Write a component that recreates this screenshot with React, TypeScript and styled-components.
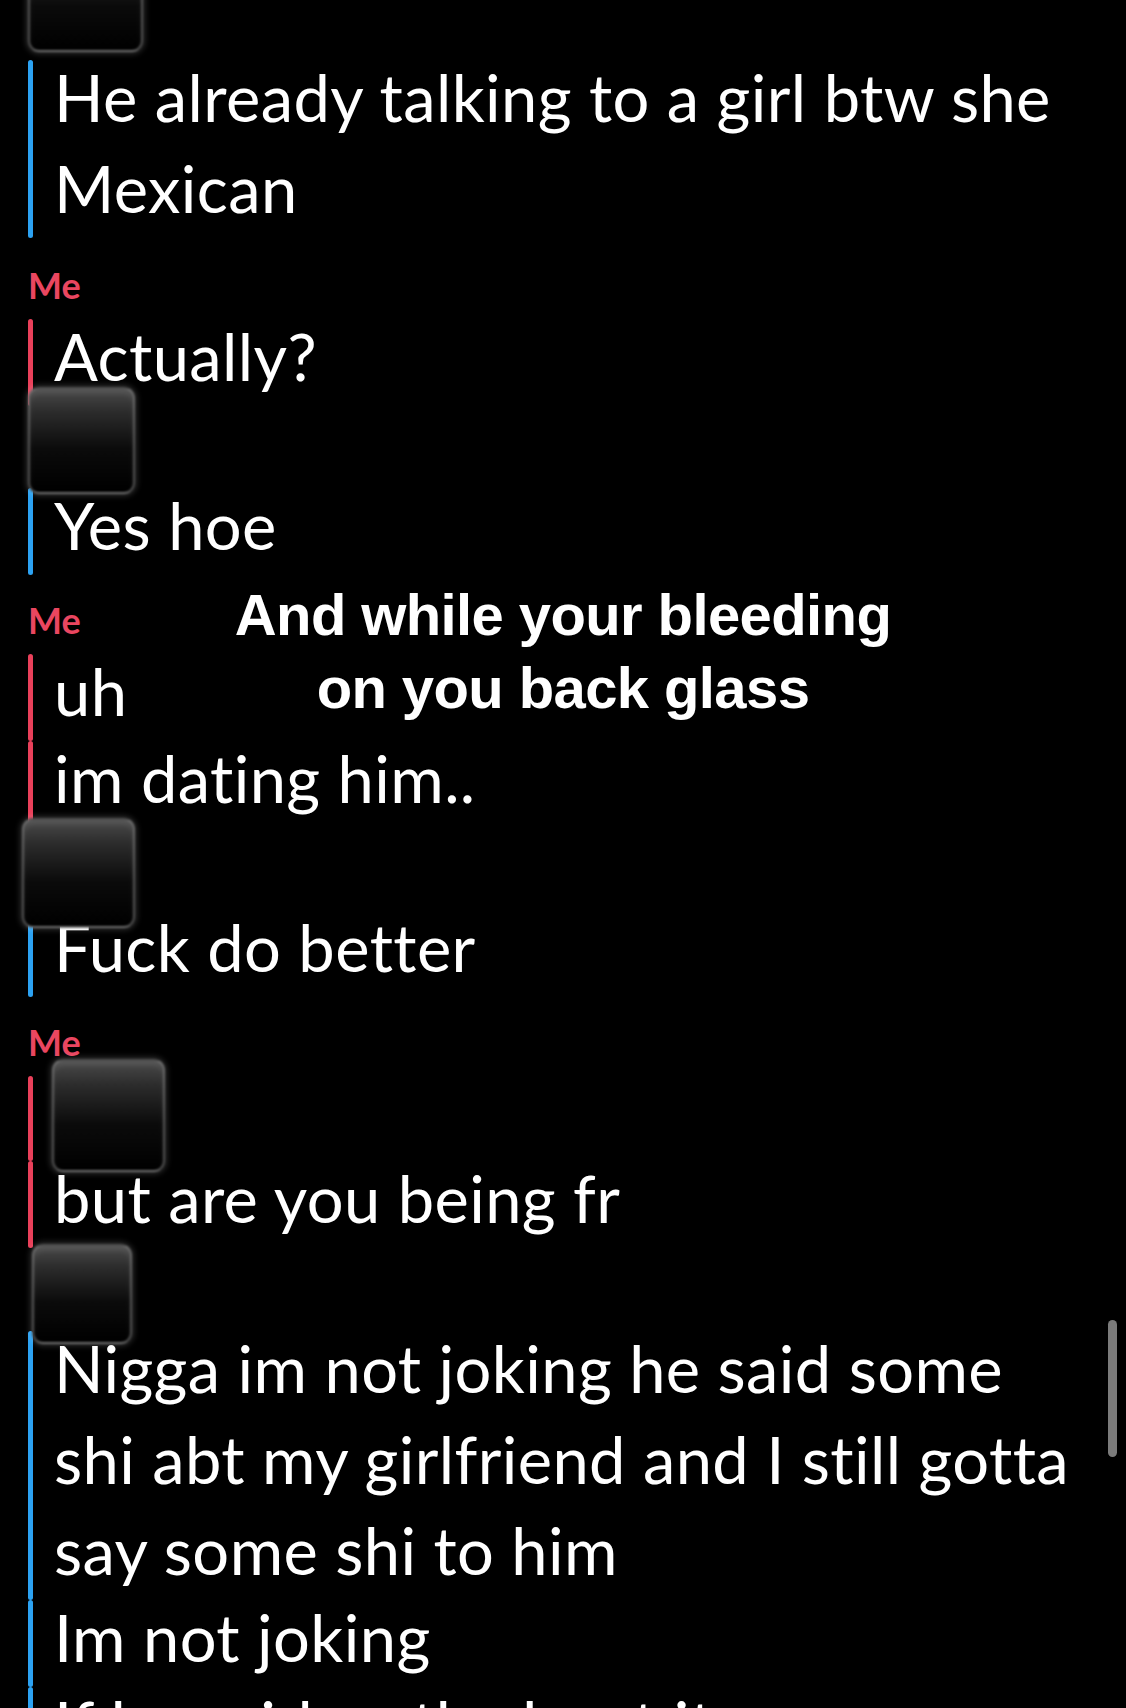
import React from "react";
import styled, { createGlobalStyle } from "styled-components";

const Global = createGlobalStyle`
  html, body {
    margin: 0;
    padding: 0;
    background: #000;
  }
  body {
    font-family: Lato, "Noto Sans", sans-serif;
  }
`;

const Screen = styled.div`
  position: relative;
  width: 1126px;
  height: 1708px;
  overflow: hidden;
  background: #000;
`;

const Chat = styled.div`
  display: flex;
  flex-direction: column;
  align-items: flex-start;
  padding-left: 28px;
  margin-top: -58px;
`;

const Thumb = styled.div<{ $w: number; $h: number; $mt: number; $mb: number; $ml?: number }>`
  position: relative;
  z-index: 1;
  width: ${(p) => p.$w}px;
  height: ${(p) => p.$h}px;
  margin-top: ${(p) => p.$mt}px;
  margin-bottom: ${(p) => p.$mb}px;
  margin-left: ${(p) => p.$ml ?? 0}px;
  box-sizing: border-box;
  border-radius: 11px;
  border: 2px solid rgba(140, 140, 140, 0.55);
  background: linear-gradient(180deg, #4a4a4a 0%, #2c2c2c 22%, #0b0b0b 58%, #000 100%);
  box-shadow: 0 0 6px 1px rgba(255, 255, 255, 0.22), inset 0 5px 5px rgba(255, 255, 255, 0.08);
  filter: blur(1.2px);
  flex-shrink: 0;
`;

const Sender = styled.div<{ $mt: number }>`
  margin-top: ${(p) => p.$mt}px;
  margin-bottom: 14px;
  font-family: Lato, "Noto Sans", sans-serif;
  font-weight: 700;
  font-size: 36px;
  line-height: 40px;
  color: #ea4660;
`;

const Segment = styled.div`
  display: flex;
  align-items: stretch;
  gap: 21px;
  width: 100%;
`;

const Bar = styled.div<{ $color: string }>`
  width: 5px;
  flex-shrink: 0;
  border-radius: 3px;
  background: ${(p) => p.$color};
`;

const Text = styled.div`
  flex: 1;
  max-width: 1040px;
  margin: -8px 0 4px;
  font-family: Lato, "Noto Sans", sans-serif;
  font-weight: 400;
  font-size: 65px;
  line-height: 91px;
  letter-spacing: 0.4px;
  font-variant-ligatures: none;
  font-feature-settings: "liga" 0, "clig" 0;
  color: #fff;
`;

const Media = styled.div<{ $mt: number; $mb: number }>`
  display: flex;
  margin-top: ${(p) => p.$mt}px;
  margin-bottom: ${(p) => p.$mb}px;
`;

const Caption = styled.div`
  position: absolute;
  z-index: 2;
  left: 0;
  right: 0;
  top: 578px;
  text-align: center;
  font-family: "Liberation Sans", Arial, sans-serif;
  font-weight: 700;
  font-size: 58px;
  line-height: 73px;
  letter-spacing: -0.6px;
  color: #fff;
  text-shadow: 0 0 2px rgba(0, 0, 0, 0.6);
`;

const ScrollThumb = styled.div`
  position: absolute;
  z-index: 2;
  left: 1108px;
  top: 1320px;
  width: 9px;
  height: 137px;
  border-radius: 5px;
  background: #7b7b7b;
`;

const BLUE = "#2ca2f2";
const RED = "#e9405a";

const Msg: React.FC<{ color: string; children: React.ReactNode }> = ({ color, children }) => (
  <Segment>
    <Bar $color={color} />
    <Text>{children}</Text>
  </Segment>
);

export default function App() {
  return (
    <Screen>
      <Global />
      <Chat>
        <Thumb $w={115} $h={110} $mt={0} $mb={8} />
        <Msg color={BLUE}>He already talking to a girl btw she Mexican</Msg>
        <Sender $mt={27}>Me</Sender>
        <Msg color={RED}>Actually?</Msg>
        <Thumb $w={107} $h={107} $mt={-19} $mb={-6} />
        <Msg color={BLUE}>Yes hoe</Msg>
        <Sender $mt={25}>Me</Sender>
        <Msg color={RED}>uh</Msg>
        <Msg color={RED}>im dating him..</Msg>
        <Thumb $w={113} $h={110} $mt={-10} $mb={-18} $ml={-6} />
        <Msg color={BLUE}>Fuck do better</Msg>
        <Sender $mt={25}>Me</Sender>
        <Segment>
          <Bar $color={RED} />
          <Media $mt={-17} $mb={-11}>
            <Thumb $w={113} $h={113} $mt={0} $mb={0} $ml={-2} />
          </Media>
        </Segment>
        <Msg color={RED}>but are you being fr</Msg>
        <Thumb $w={100} $h={100} $mt={-4} $mb={-13} $ml={4} />
        <Msg color={BLUE}>
          Nigga im not joking he said some shi abt my girlfriend and I still gotta say some shi to him
        </Msg>
        <Msg color={BLUE}>Im not joking</Msg>
        <Msg color={BLUE}>If he said smth about it</Msg>
      </Chat>
      <Caption>
        And while your bleeding
        <br />
        on you back glass
      </Caption>
      <ScrollThumb />
    </Screen>
  );
}
